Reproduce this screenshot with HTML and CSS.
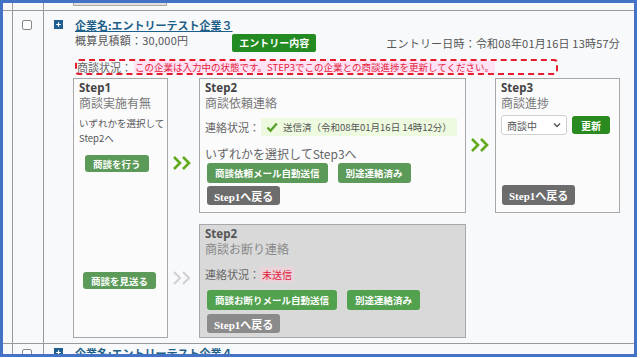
FILE: index.html
```html
<!DOCTYPE html>
<html lang="ja">
<head>
    <meta charset="UTF-8">
    <meta name="viewport" content="width=device-width, initial-scale=1.0">
    <title>商談進捗</title>
    <link rel="stylesheet" href="styles.css">
</head>
<body>
    <div class="frame">
        <div class="row row-prev">
            <div class="c0"></div>
            <div class="c1"></div>
            <div class="c2"><div class="prev-btn"></div></div>
        </div>

        <div class="row row-main">
            <div class="c0"></div>
            <div class="c1"><span class="chk"></span></div>
            <div class="c2">
                <div class="entry">
                    <svg class="plus" width="9" height="9" viewBox="0 0 9 9">
                        <rect width="9" height="9" fill="#1f5e8e"/>
                        <path d="M4.5 2.2v4.6M2.2 4.5h4.6" stroke="#fff" stroke-width="1.2"/>
                    </svg>
                    <div class="entry-body">
                        <a class="company" href="#">企業名:エントリーテスト企業３</a>
                        <div class="meta">
                            <span class="estimate">概算見積額：30,000円</span>
                            <button class="btn btn-entry">エントリー内容</button>
                            <span class="entry-date">エントリー日時：令和08年01月16日 13時57分</span>
                        </div>
                        <div class="alert">
                            <span class="alert-label">商談状況：</span>
                            <span class="alert-text">この企業は入力中の状態です。STEP3でこの企業との商談進捗を更新してください。</span>
                        </div>

                        <div class="steps">
                            <div class="step step1">
                                <div class="step-title">Step1</div>
                                <div class="step-name">商談実施有無</div>
                                <div class="note">いずれかを選択して<br>Step2へ</div>
                                <button class="btn btn-green btn-go">商談を行う</button>
                                <button class="btn btn-green btn-skip">商談を見送る</button>
                            </div>

                            <div class="arrow-col">
                                <svg class="arrow" width="20" height="16" viewBox="0 0 20 16">
                                    <path d="M2 2l6 6-6 6M11 2l6 6-6 6" fill="none" stroke="#62a91f" stroke-width="2.6"/>
                                </svg>
                                <svg class="arrow arrow-off" width="20" height="16" viewBox="0 0 20 16">
                                    <path d="M2 2l6 6-6 6M11 2l6 6-6 6" fill="none" stroke="#d2d2d2" stroke-width="2.2"/>
                                </svg>
                            </div>

                            <div class="mid">
                                <div class="step step2">
                                    <div class="step-title">Step2</div>
                                    <div class="step-name">商談依頼連絡</div>
                                    <div class="status">
                                        <span>連絡状況：</span>
                                        <span class="sent">
                                            <svg width="12" height="11" viewBox="0 0 12 11">
                                                <path d="M1.5 5.5l3 3.2L10.8 1.5" fill="none" stroke="#5aa02a" stroke-width="2.4"/>
                                            </svg>
                                            送信済（令和08年01月16日 14時12分）
                                        </span>
                                    </div>
                                    <div class="hint">いずれかを選択してStep3へ</div>
                                    <div class="btn-row">
                                        <button class="btn btn-green">商談依頼メール自動送信</button>
                                        <button class="btn btn-green">別途連絡済み</button>
                                    </div>
                                    <div class="btn-row btn-row2">
                                        <button class="btn btn-gray">Step1へ戻る</button>
                                    </div>
                                </div>

                                <div class="step step2 step2-off">
                                    <div class="step-title">Step2</div>
                                    <div class="step-name">商談お断り連絡</div>
                                    <div class="status">
                                        <span>連絡状況：</span>
                                        <span class="unsent">未送信</span>
                                    </div>
                                    <div class="btn-row">
                                        <button class="btn btn-green">商談お断りメール自動送信</button>
                                        <button class="btn btn-green">別途連絡済み</button>
                                    </div>
                                    <div class="btn-row btn-row2">
                                        <button class="btn btn-gray">Step1へ戻る</button>
                                    </div>
                                </div>
                            </div>

                            <div class="arrow-col arrow-col2">
                                <svg class="arrow" width="20" height="16" viewBox="0 0 20 16">
                                    <path d="M2 2l6 6-6 6M11 2l6 6-6 6" fill="none" stroke="#62a91f" stroke-width="2.6"/>
                                </svg>
                            </div>

                            <div class="step step3">
                                <div class="step-title">Step3</div>
                                <div class="step-name">商談進捗</div>
                                <div class="progress">
                                    <div class="select">
                                        <span>商談中</span>
                                        <svg width="8" height="6" viewBox="0 0 8 6">
                                            <path d="M1 1.5l3 3 3-3" fill="none" stroke="#555" stroke-width="1.4"/>
                                        </svg>
                                    </div>
                                    <button class="btn btn-update">更新</button>
                                </div>
                                <button class="btn btn-gray btn-back">Step1へ戻る</button>
                            </div>
                        </div>
                    </div>
                </div>
            </div>
        </div>

        <div class="row row-next">
            <div class="c0"></div>
            <div class="c1"><span class="chk"></span></div>
            <div class="c2">
                <div class="entry">
                    <svg class="plus" width="9" height="9" viewBox="0 0 9 9">
                        <rect width="9" height="9" fill="#1f5e8e"/>
                        <path d="M4.5 2.2v4.6M2.2 4.5h4.6" stroke="#fff" stroke-width="1.2"/>
                    </svg>
                    <div class="entry-body">
                        <a class="company" href="#">企業名:エントリーテスト企業４</a>
                    </div>
                </div>
            </div>
        </div>
    </div>
</body>
</html>
```

FILE: styles.css
```css
* {
    box-sizing: border-box;
}
body {
    margin: 0;
    background: #fff;
    font-family: "Noto Sans CJK JP", sans-serif;
    color: #555;
}
.frame {
    width: 637px;
    height: 357px;
    border: 3px solid #4472c4;
    background: #f8f9fb;
    overflow: hidden;
}
.row {
    display: flex;
    border-bottom: 1px solid #9a9a9a;
}
.row-prev {
    height: 8px;
}
.row-main {
    height: 333px;
}
.row-next {
    height: 40px;
    border-bottom: none;
}
.c0 {
    width: 9px;
}
.c1 {
    width: 31px;
    border-left: 1px solid #9a9a9a;
}
.c2 {
    flex: 1;
    border-left: 1px solid #9a9a9a;
}
.prev-btn {
    margin-left: 29px;
    width: 94px;
    height: 3px;
    background: #dedede;
    border: 1px solid #aaa;
    border-top: none;
}
.chk {
    display: block;
    width: 10px;
    height: 10px;
    margin: 9px 0 0 9px;
    background: #fff;
    border: 1px solid #888;
    border-radius: 2px;
}
.row-main .c2 {
    padding: 7px 0 0 10px;
}
.row-next .c1 .chk {
    margin-top: 5px;
}
.row-next .c2 {
    padding: 2px 0 0 10px;
}
.entry {
    display: flex;
    gap: 12px;
}
.plus {
    margin-top: 2px;
    flex-shrink: 0;
}
.entry-body {
    width: 546px;
    flex-shrink: 0;
}
.company {
    display: block;
    font-size: 11px;
    line-height: 14px;
    font-weight: bold;
    color: #1d5f88;
    text-decoration: underline;
}
.meta {
    display: flex;
    align-items: center;
    height: 19px;
    margin-top: 1px;
    font-size: 11px;
}
.estimate {
    align-self: flex-start;
    line-height: 14px;
    letter-spacing: 0.2px;
}
.entry-date {
    margin-left: auto;
    margin-right: 1px;
    line-height: 14px;
    letter-spacing: 0.2px;
}

/* buttons */
.btn {
    display: block;
    flex-shrink: 0;
    border: none;
    border-radius: 3px;
    padding: 0 8px;
    height: 20px;
    color: #fff;
    font-family: "Liberation Serif", "Noto Sans CJK JP", serif;
    font-size: 9.5px;
    font-weight: bold;
    white-space: nowrap;
}
.btn-entry {
    margin-left: 44px;
    height: 18px;
    padding: 0 7px;
    font-size: 10px;
    background: #238b22;
    border-radius: 2px;
}
.btn-green {
    background: #5b9a58;
}
.btn-gray {
    padding: 0 7px;
    font-size: 11px;
    background: #6c6c6c;
}
.btn-update {
    height: 18px;
    padding: 0 9px;
    font-size: 10px;
    background: #288a1f;
}

.alert {
    display: flex;
    width: 483px;
    height: 16px;
    margin-top: 7px;
    border: 2px dashed #e41c2c;
    border-radius: 4px;
    font-size: 11px;
    line-height: 12px;
    white-space: nowrap;
}
.alert-label {
    color: #666;
}
.alert-text {
    margin-left: 2px;
    padding: 0 1px;
    font-size: 9.5px;
    color: #e6213c;
    background: #ffe2f4;
}

/* steps */
.steps {
    display: flex;
    margin-top: 3px;
    margin-left: -2px;
}
.step {
    flex-shrink: 0;
    border: 1px solid #a8a8a8;
    background: #fbfbfc;
    padding: 2px 5px 0 5px;
}
.step-title {
    font-family: "Noto Sans", sans-serif;
    font-size: 11.5px;
    line-height: 14px;
    font-weight: bold;
    color: #444;
}
.step-name {
    font-size: 12px;
    line-height: 15px;
    color: #777;
}
.step1 {
    width: 95px;
    height: 260px;
    padding-right: 2px;
}
.note {
    margin-top: 6px;
    font-size: 9.5px;
    line-height: 15px;
    color: #555;
    white-space: nowrap;
}
.btn-go {
    height: 17px;
    margin: 9px 0 0 6px;
}
.btn-skip {
    height: 17px;
    margin: 100px 0 0 4px;
}
.arrow-col {
    flex-shrink: 0;
    width: 31px;
    padding-left: 4px;
}
.arrow {
    display: block;
    margin-top: 77px;
}
.arrow-off {
    margin-top: 99px;
}
.arrow-col2 {
    width: 29px;
}
.arrow-col2 .arrow {
    margin-top: 59px;
}
.mid {
    display: flex;
    flex-direction: column;
    flex-shrink: 0;
    gap: 11px;
    width: 267px;
}
.step2 {
    height: 135px;
}
.status {
    display: flex;
    align-items: center;
    height: 18px;
    margin-top: 8px;
    font-size: 11px;
    color: #666;
}
.sent {
    display: flex;
    align-items: center;
    gap: 5px;
    height: 18px;
    margin-left: 1px;
    padding: 0 5px;
    background: #eefadf;
    font-size: 9.5px;
    color: #555;
}
.hint {
    margin-top: 10px;
    font-size: 12px;
    line-height: 15px;
    color: #666;
}
.btn-row {
    display: flex;
    gap: 10px;
    margin-top: 2px;
    margin-left: 2px;
}
.btn-row2 {
    margin-top: 3px;
}
.btn-row2 .btn {
    height: 19px;
}
.step2-off {
    height: 114px;
    background: #d9d9d9;
}
.step2-off .step-title {
    color: #555;
}
.step2-off .step-name {
    color: #888;
}
.step2-off .status {
    margin-top: 9px;
}
.unsent {
    padding: 0 2px;
    font-size: 10px;
    color: #e0203a;
    background: #ebd3da;
}
.step2-off .btn-row {
    margin-top: 7px;
}
.step2-off .btn-row2 {
    margin-top: 4px;
}
.step2-off .btn-green {
    background: #52a14f;
}
.step2-off .btn-gray {
    background: #8b8b8b;
}
.step3 {
    display: flex;
    flex-direction: column;
    width: 125px;
    height: 135px;
}
.progress {
    display: flex;
    align-items: center;
    gap: 5px;
    margin-top: 5px;
}
.select {
    display: flex;
    flex-shrink: 0;
    align-items: center;
    justify-content: space-between;
    width: 66px;
    height: 20px;
    padding: 0 5px;
    background: #fff;
    border: 1px solid #d0d0d0;
    border-radius: 3px;
    font-size: 10px;
    color: #555;
}
.btn-back {
    align-self: flex-start;
    margin: auto 0 7px 1px;
}
```
